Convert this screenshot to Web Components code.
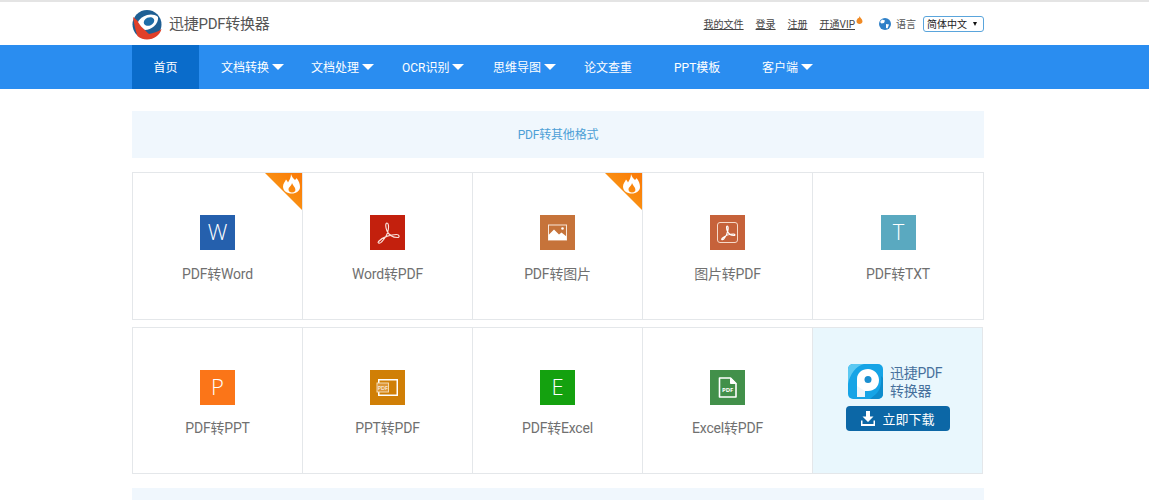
<!DOCTYPE html>
<html lang="zh"><head><meta charset="utf-8"><title>迅捷PDF转换器</title>
<style>
html,body{margin:0;padding:0;background:#fff;height:500px;overflow:hidden;font-family:Roboto,"Noto Sans CJK SC",sans-serif;}
</style></head><body>
<top-header></top-header>
<main-nav>
<nav-item active>首页</nav-item><nav-item arrow>文档转换</nav-item><nav-item arrow>文档处理</nav-item><nav-item arrow>OCR识别</nav-item><nav-item arrow>思维导图</nav-item><nav-item>论文查重</nav-item><nav-item>PPT模板</nav-item><nav-item arrow>客户端</nav-item>
</main-nav>
<page-main>
<section-banner>PDF转其他格式</section-banner>
<tool-grid>
<tool-card label="PDF转Word" color="#2560ad" hot><svg viewBox="0 0 35 35"><text x="17.5" y="25.3" text-anchor="middle" font-size="22" fill="#fff" font-family="Open Sans" font-weight="300">W</text></svg></tool-card>
<tool-card label="Word转PDF" color="#c3200d"><svg viewBox="0 0 35 35"><path d="M17 8C15.2 8 15.500 12.500 17 16C19 20.500 23 22.500 27.500 22.500C30 22.500 29.500 19.500 26.500 19.500C21.500 19.500 13 21.500 8.500 26.500C7 28.500 10 28.800 11.500 27C14.500 24 17.500 19.500 18.300 14.500C18.800 11.500 18.600 8 17 8Z" fill="none" stroke="#fbe3dc" stroke-width="1.150"/></svg></tool-card>
<tool-card label="PDF转图片" color="#c6733a" hot><svg viewBox="0 0 35 35"><rect x="8.500" y="10" width="18" height="15" fill="none" stroke="#f8e6d8" stroke-width="1"/><path d="M8.500 25V20L14 14.500L19 19.500L21.500 17.500L26.500 21.500V25Z" fill="#fff"/><circle cx="22.500" cy="13.500" r="1.300" fill="#fff"/></svg></tool-card>
<tool-card label="图片转PDF" color="#c6623a"><svg viewBox="0 0 35 35"><rect x="7.500" y="7.500" width="20" height="20" rx="2.500" fill="none" stroke="#f6d9c8" stroke-width="1"/><path d="M17.300 11C16.200 11 16.500 14 17.300 16C18.500 19 20.500 20.500 24 20.500C25.500 20.500 25 19 23.500 19C20 19 15 20.500 12 23.500C11 24.800 12.700 25 13.700 24C15.500 22 17.500 18.500 18 15C18.300 13 18.200 11 17.300 11Z" fill="none" stroke="#fff" stroke-width="1.200"/></svg></tool-card>
<tool-card label="PDF转TXT" color="#5aa9c0"><svg viewBox="0 0 35 35"><text x="17.5" y="25.3" text-anchor="middle" font-size="22" fill="#fff" font-family="Open Sans" font-weight="300">T</text></svg></tool-card>
<tool-card label="PDF转PPT" color="#fb7518"><svg viewBox="0 0 35 35"><text x="17.5" y="25.3" text-anchor="middle" font-size="22" fill="#fff" font-family="Open Sans" font-weight="300">P</text></svg></tool-card>
<tool-card label="PPT转PDF" color="#d07f06"><svg viewBox="0 0 35 35"><rect x="8.750" y="9.750" width="18.500" height="15.500" fill="none" stroke="#fff" stroke-width="1.500"/><rect x="7" y="13" width="11.500" height="9" fill="#dd9638" stroke="#f7e2c0" stroke-width=".9"/><text x="12.750" y="19.900" text-anchor="middle" font-size="5.500" fill="#fff" font-family="Noto Sans">PDF</text></svg></tool-card>
<tool-card label="PDF转Excel" color="#14a10f"><svg viewBox="0 0 35 35"><text x="17.5" y="25.3" text-anchor="middle" font-size="22" fill="#fff" font-family="Open Sans" font-weight="300">E</text></svg></tool-card>
<tool-card label="Excel转PDF" color="#42904a"><svg viewBox="0 0 35 35"><path d="M9.500 8H20.500L26 13.500V27H9.500Z" fill="none" stroke="#fff" stroke-width="1.600" stroke-linejoin="round"/><path d="M20.500 8V13.500H26Z" fill="#fff" stroke="#fff"/><text x="17.700" y="22" text-anchor="middle" font-size="6" font-weight="700" fill="#fff" font-family="Noto Sans">PDF</text></svg></tool-card>
<promo-card></promo-card>
</tool-grid>
<section-banner></section-banner>
</page-main>
<script>
function def(name,html,init){customElements.define(name,class extends HTMLElement{
  constructor(){super();this.attachShadow({mode:"open"}).innerHTML=html;}
  connectedCallback(){if(init)init(this);}
});}
const FONT='Roboto,"Noto Sans CJK SC",sans-serif';
def("top-header",`<style>
:host{display:flex;box-sizing:border-box;height:45px;border-top:2px solid #e4e4e4;background:#fff;padding:0 165px 0 132px;align-items:center;font-family:${FONT};}
.logo{width:30px;height:31px;display:block;margin-top:1px}
.title{font-size:15px;color:#555;margin-left:7px;white-space:nowrap;margin-top:-2px;letter-spacing:-.25px}
.links{margin-left:auto;display:flex;align-items:center;font-size:10px;color:#444;}
a{color:#444;text-decoration:underline;margin-right:12px;white-space:nowrap}
.vip{margin-right:0}
.fire{width:7px;height:8px;margin:-8px 0 0 1px;display:block}
.globe{width:12px;height:12px;margin-left:16px;display:block}
.lang{margin-left:5px;color:#555;white-space:nowrap}
.sel{box-sizing:border-box;margin-left:7px;width:61px;height:16px;border:1px solid #5aa5dc;border-radius:3px;display:flex;align-items:center;padding:0 3px;color:#222;white-space:nowrap}
.sel i{margin-left:auto;margin-right:3px;border:2.500px solid transparent;border-top:4px solid #111;border-bottom:0}
</style>
<svg class="logo" viewBox="0 0 30 31"><circle cx="15" cy="15.5" r="14.5" fill="#1f5f93"/><path d="M1 8C7 12 12 21 17 25C21 24 26 23 29.5 20C28 26 22 30.5 15 30.5C11 30.5 8 29 5.500 27C3 20 2 14 1 8Z" fill="#e0402a"/><path d="M6 13C10 6 20 3 26 8C27 15 19 21 13 21C10 19 8 16 6 13Z" fill="#fff"/><ellipse cx="17" cy="12.500" rx="5.500" ry="4" transform="rotate(-25 17 12.500)" fill="#1f6ea8"/></svg>
<span class="title">迅捷PDF转换器</span>
<div class="links"><a>我的文件</a><a>登录</a><a>注册</a><a class="vip">开通VIP</a>
<svg class="fire" viewBox="0 0 7 8"><path d="M3.500 0C4 2 6.500 3 6.500 5.200C6.500 7 5 8 3.500 8C2 8 .5 7 .5 5.200C.5 3.800 1.500 3.200 2 2C2.500 2.500 3.500 1.500 3.500 0Z" fill="#f08a24"/></svg>
<svg class="globe" viewBox="0 0 12 12"><circle cx="6" cy="6" r="6" fill="#2f80c8"/><path d="M3 1.500L6 2.500L5 5L2.500 5.500L1 4ZM7 6L10 6.500L8.500 10.500L7 10Z" fill="#fff"/></svg>
<span class="lang">语言</span><div class="sel">简体中文<i></i></div></div>`);
def("main-nav",`<style>
:host{display:grid;grid-template-columns:67px 90px 91px 91px 91px 90px 88px auto;justify-content:start;height:44px;background:#2a8df0;padding-left:132px;font-family:${FONT};}
</style><slot></slot>`);
def("nav-item",`<style>
:host{display:flex;align-items:center;padding:0 0 2px 22px;color:#fff;font-size:12px;white-space:nowrap;height:44px;box-sizing:border-box}
:host([active]){background:#0a6ccb;justify-content:center;padding-left:0}
i{display:none;margin:2px 0 0 3px;border:6px solid transparent;border-top:6.500px solid #fff;border-bottom:0}
:host([arrow]) i{display:block}
</style><slot></slot><i></i>`);
def("page-main",`<style>:host{display:flex;flex-direction:column;width:852px;margin-left:132px;padding-top:22px}</style><slot></slot>`);
def("section-banner",`<style>
:host{display:flex;align-items:center;justify-content:center;box-sizing:border-box;height:47px;padding-bottom:2px;background:#f0f7fd;color:#4d9fd6;font-size:12px;letter-spacing:-.2px;flex:none}
</style><slot></slot>`);
def("tool-grid",`<style>
:host{display:grid;grid-template-columns:170px 170px 170px 170px 171px;grid-template-rows:148px 147px;row-gap:7px;margin:14px 0}
</style><slot></slot>`);
def("tool-card",`<style>
:host{display:flex;flex-direction:column;align-items:center;position:relative;box-sizing:border-box;border:1px solid #e4e7ea;margin-right:-1px;background:#fff;color:#707070;font-size:14px;padding-top:42px}
.ic{width:35px;height:35px;display:block}
::slotted(svg){width:35px;height:35px;display:block}
.l{margin-top:14px;line-height:20px;white-space:nowrap;letter-spacing:-.2px}
:host(:nth-child(n+6)) .l{margin-top:13px}
.hot{display:none;position:absolute;top:0;right:0;width:37px;height:37px}
:host([hot]) .hot{display:block}
</style>
<div class="ic"><slot></slot></div><div class="l"></div>
<svg class="hot" viewBox="0 0 37 37"><defs><linearGradient id="g" x1="0" y1="1" x2="1" y2="0"><stop offset="0" stop-color="#f7a41e"/><stop offset="1" stop-color="#fb7806"/></linearGradient></defs><path d="M0 0H37V37Z" fill="url(#g)"/><path d="M26 1C27 4 28 5 30 7C31 6 31.500 5.500 31.500 5C34 8 35 11 35 14C35 18 31 20.500 27 20.500C22 20.500 18 18 18 13.500C18 10.500 20 9 21 6.500C22 7.500 22.500 8.500 23 9.500C24.500 7 26 4.500 26 1ZM27 10C26.500 13 23.500 14 23.500 16.500C23.500 18.500 25 19.500 27 19.500C29.500 19.500 30.800 18 30.300 16C29.800 14 28 12.500 27 10Z" fill="#fff" fill-rule="evenodd"/></svg>`,
function(el){el.shadowRoot.querySelector(".l").textContent=el.getAttribute("label");
el.shadowRoot.querySelector(".ic").style.background=el.getAttribute("color");});
def("promo-card",`<style>
:host{display:flex;flex-direction:column;align-items:center;box-sizing:border-box;border:1px solid #e4e7ea;background:#e9f7fd;padding-top:36px;font-family:${FONT}}
.top{display:flex;align-items:center;height:35px;align-self:flex-start;margin-left:35px}
.top svg{width:35px;height:35px;display:block}
.t{margin-left:7px;font-size:14px;line-height:18px;color:#46709c;padding-top:1px;letter-spacing:-.3px}
.btn{margin-top:7px;width:104px;height:25px;background:#0c67a6;border-radius:4px;color:#fff;font-size:13px;display:flex;align-items:center;padding-left:15px;box-sizing:border-box;}
.btn svg{width:14px;height:15px;margin-right:8px;display:block}
</style>
<div class="top"><svg viewBox="0 0 35 35"><rect width="35" height="35" rx="5" fill="#16a4e6"/><path d="M0 5a5 5 0 0 1 5-5H16C8 2 2 10 0 20Z" fill="#5cc9f2"/><path d="M28 30C32 26 34 20 33 12L35 14V30a5 5 0 0 1-5 5H22Z" fill="#0f8ccc"/><path d="M9 33V15C9 9 14 5 20 5C26 5 31 10 31 16C31 23 26 27 20 27H17V33Z" fill="#fff"/><circle cx="20" cy="15.500" r="3.500" fill="#1a8fd0"/><path d="M9 33H17V27L9 22Z" fill="#eef6fb"/></svg>
<div class="t">迅捷PDF<br>转换器</div></div>
<div class="btn"><svg viewBox="0 0 14 15"><path d="M5 0H9V5.500H12.500L7 11L1.500 5.500H5Z" fill="#fff"/><path d="M0 9.500V15H14V9.500H12.500V13H1.500V9.500Z" fill="#fff"/></svg>立即下载</div>`);
</script>
</body></html>
